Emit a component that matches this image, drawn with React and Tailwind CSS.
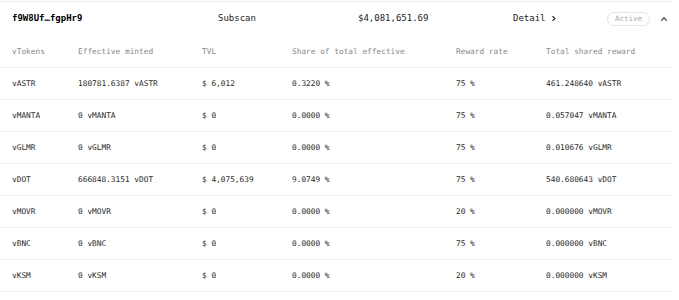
import React from "react";

const rows = [
  { token: "vASTR", minted: "180781.6387 vASTR", tvl: "$ 6,012", share: "0.3220 %", rate: "75 %", reward: "461.248640 vASTR" },
  { token: "vMANTA", minted: "0 vMANTA", tvl: "$ 0", share: "0.0000 %", rate: "75 %", reward: "0.057047 vMANTA" },
  { token: "vGLMR", minted: "0 vGLMR", tvl: "$ 0", share: "0.0000 %", rate: "75 %", reward: "0.010676 vGLMR" },
  { token: "vDOT", minted: "666848.3151 vDOT", tvl: "$ 4,075,639", share: "9.0749 %", rate: "75 %", reward: "540.680643 vDOT" },
  { token: "vMOVR", minted: "0 vMOVR", tvl: "$ 0", share: "0.0000 %", rate: "20 %", reward: "0.000000 vMOVR" },
  { token: "vBNC", minted: "0 vBNC", tvl: "$ 0", share: "0.0000 %", rate: "75 %", reward: "0.000000 vBNC" },
  { token: "vKSM", minted: "0 vKSM", tvl: "$ 0", share: "0.0000 %", rate: "20 %", reward: "0.000000 vKSM" },
];

const cols = "grid grid-cols-[66px_124px_90px_164px_90px_1fr] items-center pl-3";

export default function App() {
  return (
    <div className="bg-white min-h-screen pt-px" style={{ fontFamily: '"DejaVu Sans Mono", "Liberation Mono", monospace' }}>
      <div className="w-[672px] border-t border-[#eeeeee]">
        {/* pool header */}
        <div className="flex items-center h-[33px] pl-3 text-[9px] text-[#222]">
          <span className="w-[206px] font-bold text-black">f9W8Uf…fgpHr9</span>
          <span className="w-[140px]">Subscan</span>
          <span className="w-[155px]">$4,081,651.69</span>
          <span className="w-[94px] flex items-center gap-1">
            Detail
            <svg width="7" height="7" viewBox="0 0 10 10" fill="none" stroke="#222" strokeWidth="1.6">
              <path d="M3.5 1.5 L7 5 L3.5 8.5" />
            </svg>
          </span>
          <span className="h-[14px] px-[7px] flex items-center rounded-full border border-[#e5e5e5] text-[7.5px] text-[#aaa]">Active</span>
          <svg className="ml-[10px]" width="8" height="6" viewBox="0 0 10 7" fill="none" stroke="#333" strokeWidth="1.4">
            <path d="M1.5 5.5 L5 2 L8.5 5.5" />
          </svg>
        </div>

        {/* table header */}
        <div className={`${cols} h-[33px] pt-[2px] text-[7.8px] text-[#888] border-b border-[#eeeeee]`}>
          <span>vTokens</span>
          <span>Effective minted</span>
          <span>TVL</span>
          <span>Share of total effective</span>
          <span>Reward rate</span>
          <span>Total shared reward</span>
        </div>

        {rows.map((r) => (
          <div key={r.token} className={`${cols} h-[32px] text-[7.8px] text-[#2a2a2a] border-b border-[#eeeeee]`}>
            <span>{r.token}</span>
            <span>{r.minted}</span>
            <span>{r.tvl}</span>
            <span>{r.share}</span>
            <span>{r.rate}</span>
            <span>{r.reward}</span>
          </div>
        ))}
      </div>
    </div>
  );
}
